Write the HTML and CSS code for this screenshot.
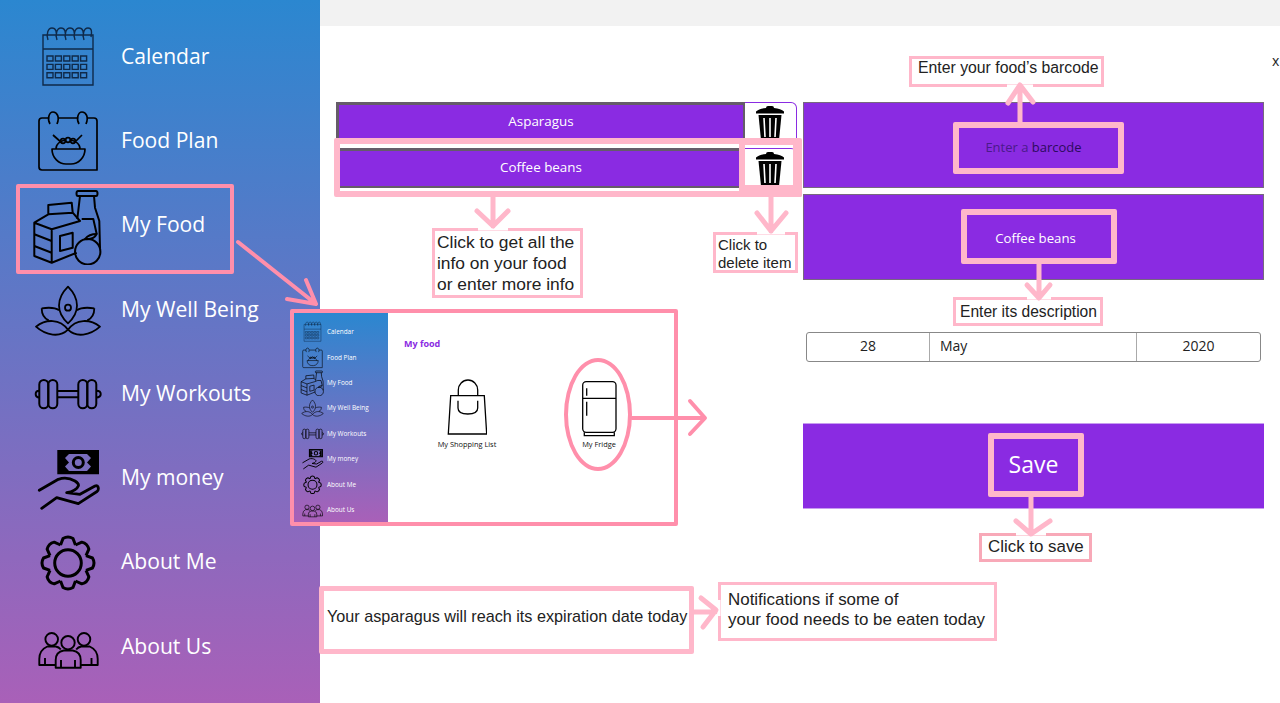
FILE: index.html
```html
<!DOCTYPE html>
<html lang="en">
<head>
    <meta charset="UTF-8">
    <title>My Food</title>
    <link rel="stylesheet" href="styles.css">
</head>
<body>
    <svg class="defs" width="0" height="0">
        <symbol id="i-calendar" viewBox="0 0 80 80">
            <g fill="none" stroke="#0f2a4a" stroke-width="1.4">
                <path d="M15 19h50v50H15zM15 33h50"/>
                <path d="M20 24c-2-6 0-12 4-12s5 4 4 9M29 24c-2-6 0-12 4-12s5 4 4 9M38 24c-2-6 0-12 4-12s5 4 4 9M47 24c-2-6 0-12 4-12s5 4 4 9M56 24c-2-6 0-12 4-12s4 4 3 9"/>
                <path d="M19 40h6v5h-6zM27.400 40h6v5h-6zM35.800 40h6v5h-6zM44.200 40h6v5h-6zM52.600 40h6v5h-6z"/>
                <path d="M19 48.400h6v5h-6zM27.400 48.400h6v5h-6zM35.800 48.400h6v5h-6zM44.200 48.400h6v5h-6zM52.600 48.400h6v5h-6z"/>
                <path d="M19 56.800h6v5h-6zM27.400 56.800h6v5h-6zM35.800 56.800h6v5h-6zM44.200 56.800h6v5h-6zM52.600 56.800h6v5h-6z"/>
            </g>
        </symbol>
        <symbol id="i-plan" viewBox="0 0 80 80">
            <g fill="none" stroke="#000" stroke-width="1.7" stroke-linejoin="round">
                <path d="M21 18h-7q-3 0-3 3v46q0 3 3 3h55V21q0-3-3-3h-7M31 18h19"/>
                <path d="M22 24c-3-5-1-12 3-12s7 5 4 12M51 24c-3-5-1-12 3-12s7 5 4 12"/>
                <path d="M24 49h33c0 9-7 15-14 15h-5c-7 0-14-6-14-15zM28 49c0-5 5-8 9-9M52 49c0-5-5-8-9-9"/>
                <path d="M25 35l9 8M54 35l-8 8"/>
                <circle cx="35" cy="41" r="2.300"/><circle cx="40" cy="40" r="2.300"/><circle cx="45" cy="41" r="2.300"/>
            </g>
        </symbol>
        <symbol id="i-food" viewBox="0 0 80 80">
            <g fill="none" stroke="#000" stroke-width="2" stroke-linejoin="round">
                <path d="M20.300 29.300V20l23.400-2.300 1 10M6.300 37.700l14-8.400 24.400-1.600L52 36 23.700 44.300zM6.300 37.700V71l17.400 6.700 25-10M23.700 44.300v33.400"/>
                <path d="M6.300 49.300L23.700 56M6.300 61l17.400 6.700M32 51l12.700-3.300v15L32 66z"/>
                <path d="M50 6h18q1.500 0 1.500 2.500T68 11H50q-1.500 0-1.500-2.500T50 6zM52 11l-2.700 23M66 11l1 11.700 4.300 13.300.7 27M53.700 34h11.600l3.400 15"/>
                <circle cx="59.700" cy="66.700" r="12.700"/>
                <path d="M57 54q4-5 11.700-5-3 6-11.700 5z"/>
            </g>
        </symbol>
        <symbol id="i-well" viewBox="0 0 80 80">
            <g fill="none" stroke="#000" stroke-width="1.800" stroke-linejoin="round">
                <path d="M40 17.700c-12 12-12 26 0 36.600 12-10.600 12-24.600 0-36.600z"/>
                <circle cx="40" cy="38.700" r="3"/>
                <path d="M13.700 39.300c7-1 14-.5 17.300 2M13.700 39.300c0 6 2 10 7 12M66.300 39.300c-7-1-14-.5-17.300 2M66.300 39.300c0 6-2 10-7 12"/>
                <path d="M8 57.700c10-8 24-8 32 3-8 8-22 6-32-3zM72 57.700c-10-8-24-8-32 3 8 8 22 6 32-3z"/>
            </g>
        </symbol>
        <symbol id="i-workout" viewBox="0 0 80 80">
            <g fill="none" stroke="#000" stroke-width="2" stroke-linejoin="round">
                <rect x="11.300" y="27" width="9" height="28.300" rx="4.500"/>
                <rect x="20.300" y="27" width="9" height="28.300" rx="4.500"/>
                <rect x="50.300" y="27" width="9" height="28.300" rx="4.500"/>
                <rect x="59.300" y="27" width="9" height="28.300" rx="4.500"/>
                <path d="M29.300 38h21M29.300 44.300h21"/>
                <path d="M11.300 37.700q-3.600 0-3.600 3.400t3.600 3.400M68.300 37.700q4.400 0 4.400 3.400t-4.400 3.400"/>
            </g>
        </symbol>
        <symbol id="i-money" viewBox="0 0 80 80">
            <path d="M29.300 12H71v24.300H29.300z"/>
            <path d="M33 16h34v17H33z" fill="#7a6dbd"/>
            <path d="M33 16h8l-4 4 4 4.500-4 4 4 4.500h-8zM67 16h-8l4 4-4 4.500 4 4-4 4.500h8z"/>
            <circle cx="50.300" cy="24.500" r="5" fill="none" stroke="#000" stroke-width="3"/>
            <path d="M11.300 52.300l19-11c6-2 12-1 16.700 1.700 3 2 4 3.500 3.300 5q-2 5-11.600 6.700l13.300 1.600L67 48q3-1 3.300 2 .3 2.500-1.300 3.500L50.300 65.700l-21.600-6-15 10.600" fill="none" stroke="#000" stroke-width="2.800" stroke-linejoin="round" stroke-linecap="round"/>
        </symbol>
        <symbol id="i-gear" viewBox="0 0 80 80">
            <g fill="none" stroke="#000" stroke-width="3" stroke-linejoin="round" transform="translate(40 41)">
                <circle r="13.300"/>
                <path d="M-7.460-18L-5-24.500Q0-27.500 5-24.500L7.460-18"/>
                <path d="M-7.460-18L-5-24.500Q0-27.500 5-24.500L7.460-18" transform="rotate(45)"/>
                <path d="M-7.460-18L-5-24.500Q0-27.500 5-24.500L7.460-18" transform="rotate(90)"/>
                <path d="M-7.460-18L-5-24.500Q0-27.500 5-24.500L7.460-18" transform="rotate(135)"/>
                <path d="M-7.460-18L-5-24.500Q0-27.500 5-24.500L7.460-18" transform="rotate(180)"/>
                <path d="M-7.460-18L-5-24.500Q0-27.500 5-24.500L7.460-18" transform="rotate(225)"/>
                <path d="M-7.460-18L-5-24.500Q0-27.500 5-24.500L7.460-18" transform="rotate(270)"/>
                <path d="M-7.460-18L-5-24.500Q0-27.500 5-24.500L7.460-18" transform="rotate(315)"/>
            </g>
        </symbol>
        <symbol id="i-us" viewBox="0 0 80 80">
            <g fill="none" stroke="#000" stroke-width="1.900" stroke-linejoin="round">
                <circle cx="40" cy="36.700" r="6.700"/>
                <circle cx="23.700" cy="33.300" r="6.300"/>
                <circle cx="56" cy="33.300" r="6.300"/>
                <path d="M27.700 61.700V54q0-8 8-9.500h9q8 1.500 8 9.500v7.700zM33 61.700V54M47 61.700V54"/>
                <path d="M27.700 59H11.300v-6q0-9 8-12.500h8.500q3 .5 5 3M52.700 59h17v-6q0-9-8-12.500h-8.500q-3 .5-5 3M17 59v-7M63.500 59v-7"/>
            </g>
        </symbol>
    </svg>

    <div class="app">
        <aside class="sidebar">
            <a class="nav-item"><svg class="nav-icon"><use href="#i-calendar"/></svg><span>Calendar</span></a>
            <a class="nav-item"><svg class="nav-icon"><use href="#i-plan"/></svg><span>Food Plan</span></a>
            <a class="nav-item"><svg class="nav-icon"><use href="#i-food"/></svg><span>My Food</span></a>
            <a class="nav-item"><svg class="nav-icon"><use href="#i-well"/></svg><span>My Well Being</span></a>
            <a class="nav-item"><svg class="nav-icon"><use href="#i-workout"/></svg><span>My Workouts</span></a>
            <a class="nav-item"><svg class="nav-icon"><use href="#i-money"/></svg><span>My money</span></a>
            <a class="nav-item"><svg class="nav-icon"><use href="#i-gear"/></svg><span>About Me</span></a>
            <a class="nav-item"><svg class="nav-icon"><use href="#i-us"/></svg><span>About Us</span></a>
        </aside>

        <main class="content">
            <div class="topbar"></div>
            <div class="close">x</div>
            <div class="columns">
                <div class="food-list">
                    <div class="food-row">
                        <div class="food-name">Asparagus</div>
                        <div class="food-delete">
                            <svg class="trash" viewBox="0 0 28 34"><path d="M10 2q0-2 2-2h4q2 0 2 2 7 .5 10 3.500v2H0v-2Q3 2.500 10 2z"/><path d="M2.500 9h23l-2.500 25H5z"/><path d="M8 12l1 19M14 12v19M20 12l-1 19" stroke="#fff" stroke-width="1.600"/></svg>
                        </div>
                    </div>
                    <div class="food-row">
                        <div class="food-name">Coffee beans</div>
                        <div class="food-delete">
                            <svg class="trash" viewBox="0 0 28 34"><path d="M10 2q0-2 2-2h4q2 0 2 2 7 .5 10 3.500v2H0v-2Q3 2.500 10 2z"/><path d="M2.500 9h23l-2.500 25H5z"/><path d="M8 12l1 19M14 12v19M20 12l-1 19" stroke="#fff" stroke-width="1.600"/></svg>
                        </div>
                    </div>
                </div>

                <div class="form">
                    <div class="field"><span class="hint">Enter a <b>barcode</b></span></div>
                    <div class="field"><span class="value">Coffee beans</span></div>
                    <div class="date">
                        <span class="day">28</span>
                        <span class="month">May</span>
                        <span class="year">2020</span>
                    </div>
                    <div class="field save">Save</div>
                </div>
            </div>
        </main>
    </div>

    <!-- small copy of the food page -->
    <div class="mini">
        <div class="mini-side">
            <a class="mini-item"><svg class="mini-icon"><use href="#i-calendar"/></svg><span>Calendar</span></a>
            <a class="mini-item"><svg class="mini-icon"><use href="#i-plan"/></svg><span>Food Plan</span></a>
            <a class="mini-item"><svg class="mini-icon"><use href="#i-food"/></svg><span>My Food</span></a>
            <a class="mini-item"><svg class="mini-icon"><use href="#i-well"/></svg><span>My Well Being</span></a>
            <a class="mini-item"><svg class="mini-icon"><use href="#i-workout"/></svg><span>My Workouts</span></a>
            <a class="mini-item"><svg class="mini-icon"><use href="#i-money"/></svg><span>My money</span></a>
            <a class="mini-item"><svg class="mini-icon"><use href="#i-gear"/></svg><span>About Me</span></a>
            <a class="mini-item"><svg class="mini-icon"><use href="#i-us"/></svg><span>About Us</span></a>
        </div>
        <div class="mini-body">
            <div class="mini-title">My food</div>
            <div class="mini-tiles">
                <div class="tile">
                    <svg class="tile-icon" viewBox="0 0 40 60"><g fill="none" stroke="#000" stroke-width="1.300"><path d="M3.700 18.700h33.600l2.400 38.300H1.300z"/><path d="M11.300 18.700V13a9.700 10 0 0 1 19.400 0v5.700"/><path d="M11 23.700V31c0 4 4 6 9.800 6s9.900-2 9.900-6v-7.300"/></g></svg>
                    <span>My Shopping List</span>
                </div>
                <div class="tile">
                    <svg class="tile-icon" viewBox="0 0 40 60"><g fill="none" stroke="#000" stroke-width="1.300"><rect x="3.700" y="4.700" width="33.300" height="50.600" rx="3.500"/><path d="M3.700 21.300H37M7.700 11.300v7.400M7.700 24.700v14M5.300 55.300v3.400h30v-3.400"/></g></svg>
                    <span>My Fridge</span>
                </div>
            </div>
        </div>
    </div>
    <div class="ring"></div>

    <!-- pink annotations drawn over the app -->
    <div class="mark mark-nav"></div>
    <div class="mark-soft mark-row"></div>
    <div class="mark-soft mark-trash"></div>
    <div class="mark-soft mark-barcode"></div>
    <div class="mark-soft mark-desc"></div>
    <div class="mark-soft mark-save"></div>

    <div class="note note-barcode">Enter your food’s barcode</div>
    <div class="note note-desc">Enter its description</div>
    <div class="note note-info">Click to get all the<br>info on your food<br>or enter more info</div>
    <div class="note note-delete">Click to<br>delete item</div>
    <div class="note note-save">Click to save</div>
    <div class="note note-alert">Your asparagus will reach its expiration date today</div>
    <div class="note note-explain">Notifications if some of<br>your food needs to be eaten today</div>

    <svg class="arrows" width="1280" height="703" viewBox="0 0 1280 703">
        <g class="gaps">
            <path d="M478 228h30M757 232h28M1007 87h26M1027 297h24M1016 533h30M718 600v16"/>
        </g>
        <g class="strong">
            <path d="M238 242l78 62M287 299l29 5-10-24"/>
            <path d="M632 418h71M690 401l15 17-15 16"/>
        </g>
        <g class="soft">
            <path d="M493 197v29M477 211l16 15 15-15"/>
            <path d="M771 197v34M757 213l14 18 15-18"/>
            <path d="M1020 122V86M1008 103l12-18 13 17"/>
            <path d="M1039 264v33M1027 285l12 13 11-13"/>
            <path d="M1031 497v37M1016 521l15 13 19-13"/>
            <path d="M694 612h21M701 598l15 12-13 17"/>
        </g>
    </svg>
</body>
</html>
```

FILE: styles.css
```css
html, body {
    margin: 0;
    padding: 0;
}
body {
    position: relative;
    width: 1280px;
    height: 703px;
    overflow: hidden;
    font-family: "Open Sans", "Noto Sans", sans-serif;
    background: #fff;
}
.defs {
    position: absolute;
}
.app {
    display: flex;
    height: 703px;
}

/* sidebar */
.sidebar {
    width: 320px;
    flex: none;
    padding-top: 14px;
    box-sizing: border-box;
    background: linear-gradient(180deg, #2b87d0 0%, #a960b8 100%);
}
.nav-item {
    display: flex;
    align-items: center;
    height: 84.3px;
    padding-left: 28px;
    color: #fff;
    font-size: 21.1px;
}
.nav-item span {
    padding-bottom: 2px;
}
.nav-icon {
    width: 80px;
    height: 80px;
    margin-right: 13px;
    flex: none;
}

/* main area */
.content {
    flex: 1;
    position: relative;
}
.topbar {
    height: 26px;
    background: #f2f2f2;
}
.close {
    position: absolute;
    left: 952px;
    top: 51px;
    font-size: 14px;
    color: #222;
}
.columns {
    display: flex;
    gap: 6px;
    padding: 76px 16px 0;
}
.food-list, .form {
    width: 461px;
    display: flex;
    flex-direction: column;
}
.food-list {
    gap: 6px;
}
.food-row {
    display: flex;
    height: 40px;
}
.food-name {
    flex: 1;
    display: flex;
    align-items: center;
    justify-content: center;
    padding-bottom: 4px;
    background: #8a2be2;
    border: solid #655c69;
    border-width: 3px 2px 2px 3px;
    color: #fff;
    font-size: 13.4px;
}
.food-delete {
    width: 52px;
    box-sizing: border-box;
    display: flex;
    justify-content: center;
    padding: 3px 2px 0 0;
    border: 1px solid #8a2be2;
    border-left: none;
    border-radius: 0 6px 0 0;
}
.trash {
    width: 28px;
    height: 34px;
}

.field {
    height: 86px;
    box-sizing: border-box;
    display: flex;
    align-items: center;
    justify-content: center;
    margin-bottom: 6px;
    background: #8a2be2;
    border: 1px solid #77687f;
    color: #fff;
    font-size: 13.2px;
}
.value {
    margin: 2px 0 0 4px;
}
.hint {
    color: #4a1a8a;
    font-size: 13px;
    margin-top: 3px;
}
.hint b {
    font-weight: 400;
    color: #2d0a5e;
}
.date {
    display: flex;
    height: 30px;
    margin: 46px 3px 61px;
    border: 1.5px solid #888;
    border-radius: 3px;
    box-sizing: border-box;
    font-size: 14px;
    line-height: 25px;
    color: #222;
}
.day {
    width: 122px;
    text-align: center;
}
.month {
    width: 196px;
    padding-left: 10px;
    border: solid #aaa;
    border-width: 0 1px;
}
.year {
    flex: 1;
    text-align: center;
}
.save {
    font-size: 23px;
    padding-bottom: 4px;
    border-color: #c79cf0;
    border-width: 1px 0;
    margin-bottom: 0;
}

/* small copy of the page */
.mini {
    position: absolute;
    left: 290px;
    top: 309px;
    width: 388px;
    height: 217px;
    box-sizing: border-box;
    display: flex;
    border: 4px solid #ff8fab;
    border-radius: 2px;
    background: #fff;
}
.mini-side {
    width: 94px;
    flex: none;
    padding-top: 6px;
    box-sizing: border-box;
    background: linear-gradient(180deg, #2b87d0 0%, #a960b8 100%);
}
.mini-item {
    display: flex;
    align-items: center;
    height: 25.4px;
    padding-left: 5px;
    color: #fff;
    font-size: 6.4px;
}
.mini-icon {
    width: 27px;
    height: 27px;
    flex: none;
    margin-right: 1px;
}
.mini-body {
    flex: 1;
    padding: 25px 0 0 16px;
}
.mini-title {
    color: #8a2be2;
    font-size: 9px;
    font-weight: 700;
    line-height: 12px;
}
.mini-tiles {
    display: flex;
    gap: 62px;
    margin: 27px 0 0 28px;
}
.tile {
    width: 70px;
    display: flex;
    flex-direction: column;
    align-items: center;
    font-size: 7.4px;
    line-height: 10px;
    color: #111;
}
.tile-icon {
    width: 40px;
    height: 60px;
    margin-bottom: 2px;
}
.ring {
    position: absolute;
    left: 564px;
    top: 358px;
    width: 68px;
    height: 113px;
    box-sizing: border-box;
    border: 4px solid #ff8fab;
    border-radius: 50%;
}

/* annotation boxes */
.mark, .mark-soft {
    position: absolute;
    box-sizing: border-box;
    border-radius: 2px;
}
.mark {
    border: 4px solid #ff8fab;
}
.mark-soft {
    border: 6px solid #ffb7ca;
}
.mark-nav {
    left: 16px;
    top: 184px;
    width: 218px;
    height: 90px;
}
.mark-row {
    left: 334px;
    top: 138px;
    width: 468px;
    height: 59px;
}
.mark-trash {
    left: 739px;
    top: 140px;
    width: 63px;
    height: 57px;
    border-width: 5px 9px 12px 6px;
}
.mark-barcode {
    left: 953px;
    top: 122px;
    width: 171px;
    height: 52px;
}
.mark-desc {
    left: 961px;
    top: 209px;
    width: 156px;
    height: 55px;
}
.mark-save {
    left: 988px;
    top: 433px;
    width: 96px;
    height: 64px;
}

.note {
    position: absolute;
    box-sizing: border-box;
    border: 3px solid #ffb7ca;
    background: #fff;
    color: #222;
    font-family: "Liberation Sans", Arial, sans-serif;
    font-size: 16px;
    white-space: nowrap;
}
.note-barcode {
    left: 909px;
    top: 56px;
    width: 195px;
    height: 31px;
    padding: 0 0 0 6px;
    font-size: 15.8px;
}
.note-desc {
    left: 953px;
    top: 297px;
    width: 150px;
    height: 29px;
    padding: 3px 0 0 4px;
    font-size: 15.6px;
}
.note-info {
    left: 432px;
    top: 228px;
    width: 151px;
    height: 70px;
    padding: 1px 0 0 2px;
    font-size: 17.4px;
    line-height: 21px;
}
.note-delete {
    left: 713px;
    top: 232px;
    width: 85px;
    height: 41px;
    padding: 1px 0 0 2px;
    font-size: 15px;
    line-height: 18px;
}
.note-save {
    left: 979px;
    top: 533px;
    width: 113px;
    height: 29px;
    padding: 1px 0 0 6px;
    border-color: #f8a9b8;
    font-size: 16.9px;
}
.note-alert {
    left: 319px;
    top: 586px;
    width: 375px;
    height: 68px;
    padding: 16px 0 0 3px;
    border-width: 5px;
    border-radius: 2px;
    font-size: 16.2px;
}
.note-explain {
    left: 718px;
    top: 582px;
    width: 279px;
    height: 59px;
    padding: 5px 0 0 7px;
    font-size: 16.95px;
    line-height: 20px;
}

.arrows {
    position: absolute;
    left: 0;
    top: 0;
    pointer-events: none;
}
.arrows path {
    fill: none;
    stroke-linecap: round;
    stroke-linejoin: round;
}
.gaps path {
    stroke: #fff;
    stroke-width: 5;
    stroke-linecap: butt;
}
.strong path {
    stroke: #ff8fab;
    stroke-width: 4;
}
.soft path {
    stroke: #ffb7ca;
    stroke-width: 5;
}
```
